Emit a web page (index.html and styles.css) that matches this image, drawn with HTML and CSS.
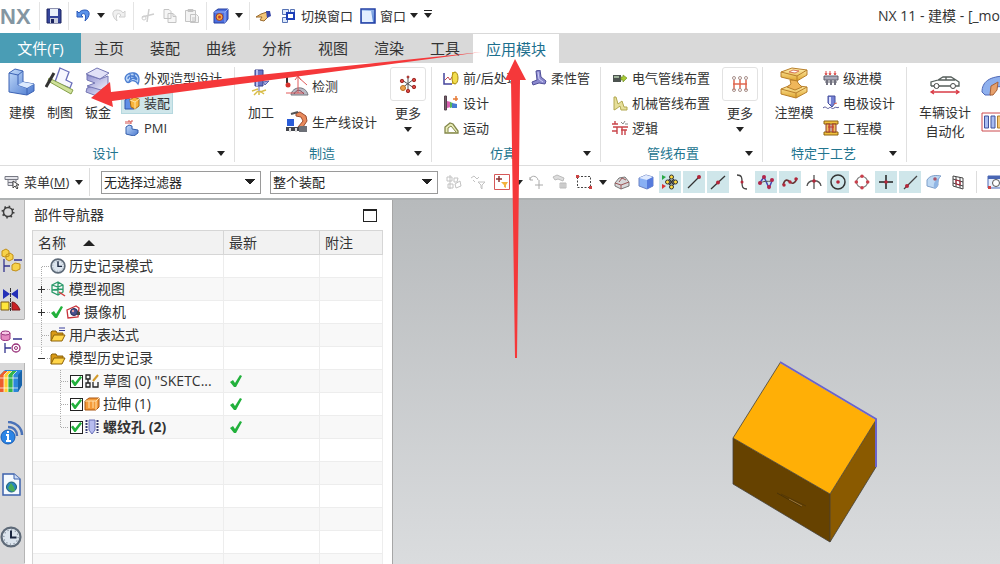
FILE: index.html
```html
<!DOCTYPE html>
<html lang="zh-CN">
<head>
<meta charset="utf-8">
<title>NX 11 - 建模</title>
<link rel="stylesheet" href="styles.css">
</head>
<body>
<svg class="defs" aria-hidden="true">
  <defs>
    <linearGradient id="blue" x1="0" y1="0" x2="1" y2="1"><stop offset="0" stop-color="#c3dcfa"/><stop offset="1" stop-color="#4a78cf"/></linearGradient>
    <linearGradient id="lilac" x1="0" y1="0" x2="1" y2="1"><stop offset="0" stop-color="#8f90d0"/><stop offset="1" stop-color="#f1f1fc"/></linearGradient>
    <linearGradient id="gold" x1="0" y1="0" x2="0" y2="1"><stop offset="0" stop-color="#fff0b0"/><stop offset="1" stop-color="#e0a52c"/></linearGradient>
    <symbol id="tick" viewBox="0 0 14 14"><path d="M1 8l3-2 2 3 5-8 2 1-6 11H5z" fill="#22b13c"/></symbol>
    <symbol id="folder" viewBox="0 0 16 16"><path d="M1 14V5l1-1h4l1 2h6v3" fill="#d99a16" stroke="#8d6208"/><path d="M1 14l3-6h11l-3 6z" fill="#ffd54a" stroke="#8d6208"/></symbol>
    <symbol id="dial" viewBox="0 0 20 20"><circle cx="10" cy="10" r="8.6" fill="#dce5ee" stroke="#5e6a78" stroke-width="2"/><circle cx="10" cy="10" r="6.5" fill="none" stroke="#7c8795" stroke-dasharray="1 2.4"/><path d="M10 4v6.500h5" fill="none" stroke="#1b2740" stroke-width="1.800"/></symbol>
  </defs>
</svg>

<div class="app">
  <header class="titlebar">
    <svg class="logo" width="34" height="20" role="img" aria-label="NX"><text x="0" y="18">NX</text></svg>
    <div class="quick">
      <button class="tool" aria-label="保存"><svg width="16" height="16"><path d="M1 1h13l1 1v13H1z" fill="#35459b" stroke="#1c2560"/><path d="M4 1h8v7H4z" fill="#eaf0fa"/><path d="M4 10h8v5H4z" fill="#c9cede"/><path d="M5 11h3v4H5z" fill="#1c2560"/></svg></button>
    </div>
    <div class="quick">
      <button class="tool" aria-label="撤消"><svg width="16" height="16"><path d="M2 3v6h6L6 7c3-3 6-1 4 6 5-4 6-11 0-11-3 0-5 1-6 3z" fill="#5b93ea" stroke="#2a58b8"/></svg></button>
      <button class="drop" aria-label="撤消列表"><i class="caret"></i></button>
      <button class="tool" aria-label="重做"><svg width="16" height="16"><path d="M14 3v6H8l2-2C7 4 4 6 6 13 1 9 0 2 6 2c3 0 5 1 6 3z" fill="#f0f0f0" stroke="#cfcfcf"/></svg></button>
    </div>
    <div class="quick">
      <button class="tool" aria-label="剪切"><svg width="16" height="16"><path d="M9 1L7 14M2 9l12-3" stroke="#cfcfcf" stroke-width="1.500" fill="none"/><circle cx="4" cy="10" r="2" fill="none" stroke="#cfcfcf"/></svg></button>
      <button class="tool" aria-label="复制"><svg width="16" height="16" fill="#f6f6f6" stroke="#c4c4c4"><path d="M2 1.500h5l2 2v7H2zM6 5.500h5l3 3v6H6zM11 5.500v3h3"/></svg></button>
      <button class="tool" aria-label="粘贴"><svg width="16" height="16" fill="#f3f3f3" stroke="#c4c4c4"><path d="M1.500 2.500h10v11h-10zM4 1.500h5v2H4zM6.500 6.500h6l2 2v6h-8zM8 10h4M8 12h4"/></svg></button>
    </div>
    <div class="quick">
      <button class="tool" aria-label="显示"><svg width="16" height="16"><path d="M1 4l4-3h10v10l-3 4H1z" fill="#4b6fe0" stroke="#273f9e"/><path d="M1 4h11v11M12 4l3-3" fill="none" stroke="#9cb2f5"/><circle cx="6.500" cy="9" r="3.500" fill="#f4ad42" stroke="#a33b2c"/><circle cx="6.500" cy="9" r="1.500" fill="#c93d2d"/></svg></button>
      <button class="drop" aria-label="显示列表"><i class="caret"></i></button>
    </div>
    <div class="quick">
      <button class="tool" aria-label="触控"><svg width="18" height="14"><path d="M1 8l5-3 6-2 2 4-5 5-4-1 2-3z" fill="#f3c678" stroke="#9a6a2d"/><path d="M11 2h4l1 5-4 2z" fill="#3847a8"/></svg></button>
      <button class="tool wide sw"><svg width="16" height="16" fill="#dce8fb" stroke="#5673b5"><path d="M1.500 1.500h6v5h-6zM9.500 1.500h4v3h-4zM1.500 9.500h5v5h-5z"/><path d="M6 5h7v6H6z" stroke-width="2" stroke="#1c3fb8" fill="#fff"/></svg><span>切换窗口</span></button>
      <button class="tool wide win"><svg width="16" height="16"><path d="M1 1h14v14H1z" fill="url(#blue)" stroke="#2340a5" stroke-width="1.500"/><path d="M2 3h9l2 11H2z" fill="#e3efff"/></svg><span>窗口</span><i class="caret"></i></button>
      <button class="drop last" aria-label="工具条选项"><i class="caret barred"></i></button>
    </div>
    <h1 class="doc">NX 11 - 建模 - [_mo</h1>
  </header>

  <nav class="tabs">
    <button class="file">文件(F)</button>
    <button>主页</button><button>装配</button><button>曲线</button><button>分析</button><button>视图</button><button>渲染</button><button>工具</button>
    <button class="on">应用模块</button>
  </nav>

  <div class="ribbon">
    <section class="group g-design">
      <div class="items">
        <button class="big"><svg width="30" height="30"><path d="M2 6l6-4 8 2v11l11 2v7l-7 4-18-3z" fill="url(#blue)" stroke="#3c63b4"/><path d="M2 6l9 2v10l9 3v7M11 8l5-4M20 21l7-4" fill="none" stroke="#3c63b4"/><path d="M11 18l5-3 11 2-7 4z" fill="#dcebff"/></svg><span>建模</span></button>
        <button class="big"><svg width="30" height="30"><path d="M15 1l9 4-3 8 6 3-2 5-15-6z" fill="#f7f7ff" stroke="#6a6fbb" stroke-width="1.300"/><path d="M4 11l24 12-2 4L3 14z" fill="#cfe19a" stroke="#86a049"/><path d="M9 6L1 20" stroke="#333" stroke-width="3"/></svg><span>制图</span></button>
        <button class="big"><svg width="30" height="30" stroke="#7476b4"><path d="M4 21l14-4 8 4-12 8-11-4z" fill="url(#lilac)"/><path d="M4 8l13 4 8-3v9l-7 5-14-4 8-3-8-3z" fill="url(#lilac)"/><path d="M3 7l11-6 12 5-9 6z" fill="#e1e1f7"/></svg><span>钣金</span></button>
        <div class="stack">
          <button class="small"><svg width="16" height="16" fill="none" stroke="#4b7dd0" stroke-width="1.300"><path d="M2 11C-1 6 5 2 10 3c5 1 6 6 4 11-2-3-4-4-7-3-2 2-4 2-5 0z" fill="#b9d5f8"/><path d="M4 9c0-4 7-4 9 0M6 4l1 6M10 3l1 6M5 12c1-4 5-5 8-2"/></svg><span>外观造型设计</span></button>
          <button class="small lit"><svg width="16" height="16"><path d="M1 5l3-2 3 2v4l3 1v4H1z" fill="#5f8ee6" stroke="#3154a8"/><path d="M6 5l4-3 5 2v7l-4 3-4-2z" fill="#f9b43a" stroke="#ad6c13"/><path d="M6 5l5 2v7M11 7l4-3" fill="none" stroke="#fde3a4"/></svg><span>装配</span></button>
          <button class="small"><svg width="16" height="16"><path d="M2 7l3-2 3 1v3l6 1v3l-4 3-8-2z" fill="url(#blue)" stroke="#355fab"/><path d="M2 1v3M4 4V1h2v3M9 1h-2v3" stroke="#d2524f" fill="none"/></svg><span>PMI</span></button>
        </div>
      </div>
      <footer><h2>设计</h2><button class="more" aria-label="设计选项"><i class="caret"></i></button></footer>
    </section>

    <section class="group g-make">
      <div class="items">
        <button class="big shift"><svg width="20" height="30"><path d="M4 3h8v16H4z" fill="#6875c6" stroke="#38408c"/><path d="M6 3v16" stroke="#b6bff0" stroke-width="2"/><path d="M8 19v6M12 15l6-1-4 4z" stroke="#5b64ad" fill="#aab0e6"/><path d="M1 24l6-2M15 23l-6 2M3 28l4-4M13 27l-4-3M8 24v4" stroke="#d8bd48" stroke-width="1.500"/></svg><span>加工</span></button>
        <div class="stack tall">
          <button class="small"><svg width="24" height="24"><path d="M2 2v7" stroke="#333" stroke-width="2"/><circle cx="3" cy="11" r="2.500" fill="#d8322c"/><path d="M6 21c1-9 15-10 17 0z" fill="#b9bac4" stroke="#74767f"/><path d="M13 19V3M10 6l3-4 3 4M13 3l9 8M1 19h18" stroke="#e25a5a" fill="none"/><path d="M9 20c3-5 6-5 10 0" fill="none" stroke="#8b4a5b"/></svg><span>检测</span></button>
          <button class="small"><svg width="24" height="24"><path d="M2 9h7v7H2z" fill="#2a5dd8"/><path d="M11 3l4-1 6 4 1 5-4 6h-5l5-6-2-4-5-1z" fill="#e98a5c" stroke="#9a4c2e"/><path d="M6 4l7-2" stroke="#555" stroke-width="2"/><path d="M1 17h21v4H1z" fill="#44464d"/><path d="M14 16h8v6h-8z" fill="#6d7077"/><path d="M4 18h2v4H4zM10 18h2v4h-2z" fill="#ddd"/></svg><span>生产线设计</span></button>
        </div>
        <button class="big gallery"><span class="frame"><svg width="18" height="20" stroke="#555"><path d="M9 3v13M3 6l12 8M15 5L3 14"/><g fill="#d8453f" stroke="#a12e2a"><circle cx="9" cy="3" r="1"/><circle cx="15" cy="6" r="1.700"/><circle cx="3" cy="7" r="1.700"/><circle cx="15" cy="13" r="1.700"/><circle cx="9" cy="17" r="1.700"/></g><circle cx="4" cy="14" r="2.500" fill="#eda04c" stroke="#b97324"/></svg></span><span>更多</span><i class="caret"></i></button>
      </div>
      <footer><h2>制造</h2><button class="more" aria-label="制造选项"><i class="caret"></i></button></footer>
    </section>

    <section class="group g-sim">
      <div class="items">
        <div class="stack">
          <button class="small"><svg width="16" height="16"><path d="M1 3v11h8" fill="none" stroke="#44449c" stroke-width="1.500"/><path d="M2 10l3-3 2 3 2-3" stroke="#c6474c" fill="none"/><path d="M9 2h3v12H9z" fill="#d9b824"/><ellipse cx="12" cy="8" rx="3" ry="6" fill="#f3de4e" stroke="#a78a14"/></svg><span>前/后处理</span></button>
          <button class="small"><svg width="16" height="16"><path d="M1.500 1h2v14h-2z" fill="#75616c" stroke="#54434d"/><path d="M4 6l4 1v5l-4 1z" fill="#d95fb0"/><path d="M7 7l3 1v4l-3 1z" fill="#56b85a"/><path d="M9 8l5 1v4l-5 0z" fill="#477ad2"/><path d="M13 1v5M10 4h5" stroke="#e67b36" stroke-width="1.500"/></svg><span>设计</span></button>
          <button class="small"><svg width="16" height="16"><path d="M2 13V7l5-4 3 1 5 7v2z" fill="#e9edb7" stroke="#82864b" stroke-width="1.300"/><path d="M5 12V8l3-2 5 6" fill="#fff" stroke="#82864b"/></svg><span>运动</span></button>
        </div>
        <div class="stack second">
          <button class="small"><svg width="16" height="16"><path d="M5 1l4-1 1 7 5 4-1 3-6-1-6 2-1-3 5-2z" fill="#8a88ce" stroke="#504f98"/><path d="M7 2l1 7 4 3" stroke="#cfcff6" fill="none"/></svg><span>柔性管</span></button>
        </div>
      </div>
      <footer><h2>仿真</h2><button class="more" aria-label="仿真选项"><i class="caret"></i></button></footer>
    </section>

    <section class="group g-pipe">
      <div class="items">
        <div class="stack">
          <button class="small"><svg width="16" height="16"><path d="M1 5h8v7H1z" fill="#4c5350"/><path d="M2 6h5v2H2z" fill="#9fb39a"/><path d="M9 7h2V5l4 3-4 4v-2H9z" fill="#a8cb34" stroke="#74922a" stroke-width=".7"/></svg><span>电气管线布置</span></button>
          <button class="small"><svg width="16" height="16"><path d="M2 2h2l2 7 4-3 2 6h3v3H9l-1-4-4 3-2 1z" fill="#e6df9a" stroke="#b2a850"/></svg><span>机械管线布置</span></button>
          <button class="small"><svg width="16" height="16" fill="none" stroke="#c9444a" stroke-width="1.400"><path d="M0 4h6M3 1v3M1 7h15M5 7v7M0 11h5M10 7v8M13 10v5M9 10h6"/><path d="M9 2l2 2 2-3M13 4h3" stroke="#888" stroke-width="1"/></svg><span>逻辑</span></button>
        </div>
        <button class="big gallery"><span class="frame"><svg width="18" height="20" fill="none" stroke="#e0674f" stroke-width="1.500"><path d="M2 10h14M3 6v10M9 5v10M15 6v10"/><g stroke="#a9918c" stroke-width="1"><circle cx="3" cy="4" r="1.500"/><circle cx="9" cy="4" r="1.500"/><circle cx="15" cy="4" r="1.500"/><circle cx="3" cy="16" r="1.500"/><circle cx="9" cy="16" r="1.500"/><circle cx="15" cy="16" r="1.500"/></g></svg></span><span>更多</span><i class="caret"></i></button>
      </div>
      <footer><h2>管线布置</h2><button class="more" aria-label="管线布置选项"><i class="caret"></i></button></footer>
    </section>

    <section class="group g-proc">
      <div class="items">
        <button class="big"><svg width="30" height="32" stroke="#b87f2b"><path d="M2 22l10-4 16 2v5l-11 6-15-4z" fill="url(#gold)"/><path d="M2 22l15 4 11-6M17 26v5" fill="none"/><path d="M11 13h7l1 3 4 4-7 3-8-3 4-3z" fill="#f0b65a"/><path d="M2 5l11-4 15 2v5l-10 6-16-4z" fill="url(#gold)"/><path d="M2 5l16 4 10-6M18 9v5" fill="none"/><path d="M10 5l4-2 6 1-4 2z" fill="#fff" stroke="#d9775a"/></svg><span>注塑模</span></button>
        <div class="stack">
          <button class="small"><svg width="16" height="16"><path d="M3 1v4M7 1v4M12 1v4M2 3l1 2 1-2M6 3l1 2 1-2M11 3l1 2 1-2" stroke="#db4846" fill="none"/><path d="M1 6h14v4H1zM2 12h12" fill="#a9a9b8" stroke="#5e5e6c"/><path d="M4 10v5M8 10v5M12 10v5" stroke="#72727f" stroke-width="2"/></svg><span>级进模</span></button>
          <button class="small"><svg width="16" height="16"><path d="M5 1h7v7l-3 4-4-4z" fill="#7581d3" stroke="#464f9a"/><path d="M7 2v7" stroke="#dde1ff" stroke-width="2"/><path d="M0 13c3-3 4 2 6 0s3 2 5 0 4 1 5-1" fill="none" stroke="#57579a"/><path d="M11 9l3-1" stroke="#df6a5a"/></svg><span>电极设计</span></button>
          <button class="small"><svg width="16" height="16"><path d="M1 1h14v3H1zM1 12h14v3H1z" fill="#f2c13d" stroke="#8b6312"/><path d="M3 4h4v8H3zM9 4h4v8H9z" fill="#f0c060" stroke="#8f3a2b"/><path d="M5 7h6M6 4v8M10 4v8" stroke="#c23a33"/></svg><span>工程模</span></button>
        </div>
      </div>
      <footer><h2>特定于工艺</h2><button class="more" aria-label="特定于工艺选项"><i class="caret"></i></button></footer>
    </section>

    <section class="group g-auto">
      <div class="items">
        <button class="big"><svg width="32" height="30" fill="none"><path d="M2 19v-4l7-2 5-3h8l5 3 3 2v4h-3M10 19h11M5 19H2M9 13h17M17 10v3" stroke="#555e5b" stroke-width="1.300"/><circle cx="7.500" cy="19" r="2.500" stroke="#444"/><circle cx="24" cy="19" r="2.500" stroke="#444"/><path d="M2 25h28M5 23l-3 2 3 2M27 23l3 2-3 2" stroke="#d93c47" stroke-width="1.300"/></svg><span>车辆设计<br>自动化</span></button>
        <div class="edge">
          <button aria-label="车身"><svg width="26" height="22"><path d="M1 17C1 7 8 1 26 1v14h-4c-2-5-6-4-9 0l-3 5H4z" fill="#8eb0ee" stroke="#5069b6"/><path d="M9 20l1-9 7-4-1 8-4 5z" fill="#e7a16c" stroke="#a86239"/></svg></button>
          <button aria-label="车窗"><svg width="26" height="22"><path d="M1 2h25v18H1z" fill="#fff" stroke="#cc4a4f"/><path d="M3.500 5h4v12h-4zM10 5h4v12h-4z" fill="#a9bdf0" stroke="#41539e"/><path d="M16.500 5h5v12h-5z" fill="#f4c473" stroke="#af7d2c"/></svg></button>
        </div>
      </div>
    </section>
  </div>

  <div class="selectbar">
    <button class="menu"><svg width="16" height="16" fill="#e4e4ea" stroke="#777983"><path d="M1 2.500h13v3H1zM4 5.500h8v3H4zM4 8.500h5v3H4z"/><path d="M9 7v7l2-2 2 3 1-1-2-3h3z" fill="#fff" stroke="#444"/></svg><span>菜单(<u>M</u>)</span><i class="caret"></i></button>
    <select class="pick" aria-label="类型过滤器"><option>无选择过滤器</option></select>
    <select class="pick scope" aria-label="选择范围"><option>整个装配</option></select>
    <div class="snaps">
      <button aria-label="过滤装配"><svg width="16" height="16" fill="none" stroke="#c2c2c2"><path d="M1 3h5v4H1zM2 10h5v4H2zM4 1v14M8 4h4l-1 4H8zM9 10l5-3 1 5-5 2z"/></svg></button>
      <button aria-label="重置过滤"><svg width="16" height="16" fill="none" stroke="#c2c2c2"><path d="M1 4l3-2 3 3 2-2M3 6l2 2M8 8h7l-3 3v4l-1-1v-3z"/></svg></button>
      <button class="boxed" aria-label="选择过滤"><svg width="16" height="16"><path d="M.5.5h15v15H.5z" fill="#fff" stroke="#d65858"/><path d="M5 2v6M2 5h6" stroke="#8d3434" stroke-width="1.500"/><path d="M7 8h7l-2 3v3l-2-1v-2z" fill="#f2b43e"/></svg></button>
      <button class="drop slim" aria-label="过滤列表"><i class="caret"></i></button>
      <button aria-label="返回"><svg width="16" height="16" fill="none" stroke="#aaa"><path d="M2 6c0-5 7-5 8 0M2 3v3h3M11 6v9M7 11h8"/></svg></button>
      <button aria-label="移除"><svg width="16" height="16" fill="#ddd" stroke="#bbb"><path d="M1 3l4-2 7 3-1 3-5-2-3 1zM8 9h6v5H8zM10 9v5M12 9v5"/></svg></button>
      <button aria-label="矩形选择"><svg width="16" height="16" fill="none"><path d="M1.500 2.500h13v11h-13z" stroke="#444" stroke-dasharray="2 1.500"/><path d="M0 1h3v3H0zM13 12h3v3h-3z" fill="#c44"/></svg></button>
      <button class="drop mid" aria-label="选择列表"><i class="caret"></i></button>
      <button aria-label="隐藏边"><svg width="16" height="16"><path d="M1 9l4-5 6-1 4 5v4l-8 3-6-3z" fill="#d8d8da" stroke="#777"/><path d="M1 9l6 2 8-3M7 11v4M5 8l3-4 4 2" stroke="#9c5454" fill="none"/></svg></button>
      <button aria-label="着色"><svg width="16" height="16"><path d="M1 4l7-3 7 2v9l-6 3-8-3z" fill="#89b0f4" stroke="#6c83c4"/><path d="M1 4l7-3 7 2-6 3z" fill="#dfeaff"/><path d="M9 6l6-3v9l-6 3z" fill="#567bdc"/></svg></button>
      <button class="lit" aria-label="启用捕捉点"><svg width="18" height="18"><path d="M1 2l4 2-4 3z" fill="#28a845"/><path d="M1 11l4 2-4 3z" fill="#d33"/><g fill="#ffdb3d" stroke="#333"><circle cx="10.500" cy="4" r="2"/><circle cx="6.500" cy="9" r="2"/><circle cx="14.500" cy="9" r="2"/><circle cx="10.500" cy="14" r="2"/></g><path d="M8 6l5 6M13 6l-5 6" stroke="#333" stroke-width="1.500"/></svg></button>
      <button class="lit" aria-label="端点"><svg width="16" height="16"><path d="M2 14L14 2" stroke="#333" stroke-width="1.300"/><circle cx="13" cy="3" r="2" fill="#b3263a"/></svg></button>
      <button class="lit" aria-label="中点"><svg width="16" height="16"><path d="M1 15L15 2" stroke="#333" stroke-width="1.300"/><circle cx="8" cy="8.500" r="2" fill="#b3263a"/></svg></button>
      <button aria-label="控制点"><svg width="16" height="16"><path d="M3 1c5 0 5 3 5 7s0 7 5 7" stroke="#444" stroke-width="1.300" fill="none"/><circle cx="8" cy="8" r="1.500" fill="#b3263a"/></svg></button>
      <button class="lit" aria-label="极点"><svg width="16" height="16"><path d="M1 10L6 3l5 11 3-7" stroke="#4444b0" fill="none" stroke-width="1.500"/><path d="M1 10c5-4 8-2 13-3" stroke="#555" fill="none"/><g fill="#b3264a"><circle cx="2" cy="9" r="2"/><circle cx="6" cy="3" r="2"/><circle cx="11" cy="13" r="2"/><circle cx="14" cy="6" r="2"/></g></svg></button>
      <button class="lit" aria-label="定义点"><svg width="16" height="16"><path d="M1 11c2-7 5-5 7-3s5 2 7-4" stroke="#633" fill="none" stroke-width="1.600"/><g fill="#b3263a"><circle cx="2" cy="11" r="1.700"/><circle cx="8" cy="8" r="1.700"/><circle cx="14" cy="5" r="1.700"/></g></svg></button>
      <button aria-label="交点"><svg width="16" height="16"><path d="M1 12C2 5 14 5 15 12M8 1v14" stroke="#555" fill="none" stroke-width="1.300"/><circle cx="8" cy="7" r="1.800" fill="#b3263a"/></svg></button>
      <button class="lit" aria-label="圆心"><svg width="16" height="16"><circle cx="8" cy="8" r="7" fill="none" stroke="#333" stroke-width="1.500"/><circle cx="8" cy="8" r="1.800" fill="#b3263a"/></svg></button>
      <button aria-label="象限点"><svg width="16" height="16"><circle cx="8" cy="8" r="5.500" fill="none" stroke="#777" stroke-width="1.200"/><g fill="#c9404c"><circle cx="8" cy="2.300" r="1.800"/><circle cx="8" cy="13.700" r="1.800"/><circle cx="2.300" cy="8" r="1.800"/><circle cx="13.700" cy="8" r="1.800"/></g></svg></button>
      <button class="lit" aria-label="现有点"><svg width="16" height="16"><path d="M8 1v14M1 8h14" stroke="#222" stroke-width="1.500"/><circle cx="8" cy="8" r="1.800" fill="#b3263a"/></svg></button>
      <button class="lit" aria-label="曲线上的点"><svg width="16" height="16"><path d="M2 15L15 2" stroke="#444" stroke-width="1.300"/><circle cx="5" cy="12" r="2" fill="#b3263a"/></svg></button>
      <button aria-label="面上的点"><svg width="16" height="16"><path d="M1 6c3-5 9-5 14-4-3 2-3 5-3 9-1 2-2 4-4 3l-7-2z" fill="#bdd8f3" stroke="#7f9fc9"/><path d="M8 14c-1-6 2-8 7-12-3 3-3 6-3 9-1 2-2 4-4 3z" fill="#8fb5e4"/><circle cx="9" cy="5" r="1.800" fill="#a8556a"/></svg></button>
      <button aria-label="栅格点"><svg width="16" height="16"><path d="M3 2l10 2v11L3 12zM3 5l10 3M3 9l10 3M6 3v10M10 3v11" fill="none" stroke="#444"/><path d="M6 6l4 1v4l-4-1z" stroke="#b3263a" fill="none"/></svg></button>
    </div>
    <button class="fit" aria-label="窗口缩放"><svg width="16" height="16"><path d="M1 2h14v12H1z" fill="#e8f0fd" stroke="#4966b4"/><path d="M1 2h14v3H1z" fill="#4966b4"/><circle cx="9" cy="9" r="3.500" fill="#fff" stroke="#555"/><path d="M1 12h3v3H1z" fill="#c44"/></svg></button>
  </div>

  <main class="work">
    <nav class="rail">
      <button class="gear" aria-label="设置"><svg width="16" height="16"><circle cx="8" cy="8" r="4.500" fill="none" stroke="#3f3f3f" stroke-width="1.500"/><circle cx="8" cy="8" r="5.500" fill="none" stroke="#3f3f3f" stroke-width="2" stroke-dasharray="1.500 2.820"/></svg></button>
      <button class="r1" aria-label="装配导航器"><svg width="22" height="26"><g fill="#f7d24a" stroke="#c28f16"><path d="M2 3l4-2 3 2v5L5 9 2 8zM6 7l4-2 3 2v4l-4 2-3-2zM12 17l3-2 5 1v5l-4 2-4-1z"/></g><path d="M4 11v13M4 18h6M14 12h8" stroke="#33338e" stroke-width="1.300"/></svg></button>
      <button class="r1" aria-label="约束导航器"><svg width="22" height="24"><path d="M3 1l7 5-7 5zM18 1l-7 5 7 5z" fill="#2430b8"/><path d="M10.500 0v23" stroke="#333" stroke-dasharray="4 1"/><path d="M1 14h8v8H1z" fill="#ffe63b" stroke="#7d5a14"/><path d="M12 14c3 0 6 3 8 8h-8z" fill="#c91f24" stroke="#7b1616"/></svg></button>
      <button class="r2 on" aria-label="部件导航器"><svg width="22" height="24"><path d="M1 3v6c1 2 8 2 9 0V3" fill="#e58bc2" stroke="#98307a"/><ellipse cx="5.500" cy="3" rx="4.500" ry="2" fill="#f7c9e6" stroke="#98307a"/><path d="M5 13v10M5 18h6M13 9h9" stroke="#33338e" stroke-width="1.300"/><circle cx="16" cy="18" r="4" fill="#fff" stroke="#98307a" stroke-width="1.300"/><circle cx="16" cy="18" r="1.500" fill="none" stroke="#98307a"/></svg></button>
      <button class="r3" aria-label="重用库"><svg width="22" height="26"><path d="M0 7l5-5h17v15l-4 7H0z" fill="#2c87d8"/><path d="M0 7h4v17H0zM0 7l4-4h4L4 7z" fill="#ed5d2d"/><path d="M4 7h4v17H4zM4 7l4-4h4L8 7z" fill="#ffd02f"/><path d="M8 7h5v17H8zM8 7l4-4h5l-4 4z" fill="#35b44c"/><path d="M18 7l4-5v15l-4 7z" fill="#1863aa"/><path d="M4 7v17M8 7v17M13 7v17M0 10h18M0 20h18M4 7l4-4M8 7l4-4M13 7l4-4" stroke="#fff" stroke-opacity=".7"/></svg></button>
      <button class="r4" aria-label="HD3D 工具"><svg width="24" height="24" fill="none"><circle cx="8" cy="16" r="7" fill="#2d86e6" stroke="#1a5cb2"/><path d="M8 10v2M6 14h2v5M6 20h5" stroke="#fff" stroke-width="2"/><path d="M8 6c6 0 9 4 9 9M8 1c8 0 14 6 14 13" stroke="#4a72b8" stroke-width="2.500"/></svg></button>
      <button class="r4" aria-label="网页浏览器"><svg width="22" height="24"><path d="M3 1h11l6 5v16H3z" fill="#f5faff" stroke="#3c62ad" stroke-width="1.500"/><path d="M14 1v5h6" fill="#cddcf5" stroke="#3c62ad"/><circle cx="11.500" cy="14" r="5" fill="#2a86c0" stroke="#1b5f6f"/><path d="M8 15l3-5 3 4 1 4c-3 1-5 0-7-3z" fill="#48ad57"/></svg></button>
      <button class="r4" aria-label="历史记录"><svg width="22" height="22"><use href="#dial"/></svg></button>
    </nav>

    <aside class="panel">
      <header><h2>部件导航器</h2><button class="dock" aria-label="停靠"></button></header>
      <table>
        <colgroup><col class="c-name"><col class="c-new"><col></colgroup>
        <thead><tr><th>名称<i class="sort"></i></th><th>最新</th><th>附注</th></tr></thead>
        <tbody>
          <tr><td><div class="node"><svg class="branch" width="17" height="23"><path d="M8.500 12v11M9 11.500h8"/></svg><svg width="16" height="16"><use href="#dial"/></svg><span>历史记录模式</span></div></td><td></td><td></td></tr>
          <tr><td><div class="node"><button class="twist" aria-label="展开模型视图"><svg class="branch" width="18" height="23"><path d="M8.500 0v7M8.500 17v6M14 11.500h3"/><path class="sign" d="M5 11.500h7M8.500 8v7"/></svg></button><svg width="16" height="16"><path d="M2 4l6-3 5 3v7l-5 3-6-3zM2 4l6 2 5-2M8 1v13M2 9l11-1" fill="none" stroke="#2a9a6a" stroke-width="1.300"/><path d="M9 11l6 4" stroke="#d23c3c" stroke-width="1.500"/></svg><span>模型视图</span></div></td><td></td><td></td></tr>
          <tr><td><div class="node"><button class="twist" aria-label="展开摄像机"><svg class="branch" width="18" height="23"><path d="M8.500 0v7M8.500 17v6M14 11.500h3"/><path class="sign" d="M5 11.500h7M8.500 8v7"/></svg></button><svg width="14" height="14"><use href="#tick"/></svg><svg width="16" height="16"><path d="M2 6l9-4 3 2-1 9-10 1z" fill="#fff" stroke="#c8323a" stroke-width="1.300"/><circle cx="9" cy="8" r="3.500" fill="#49508e" stroke="#272b57"/><path d="M12 7l3 1v3h-3z" fill="#444"/><circle cx="8" cy="7" r="1.200" fill="#e4a0a8"/></svg><span>摄像机</span></div></td><td></td><td></td></tr>
          <tr><td><div class="node"><svg class="branch" width="17" height="23"><path d="M8.500 0v23M9 11.500h8"/></svg><svg width="16" height="16"><use href="#folder"/><path d="M9 1h6M9 3.500h6" stroke="#3a3f9c"/></svg><span>用户表达式</span></div></td><td></td><td></td></tr>
          <tr><td><div class="node"><button class="twist" aria-label="折叠模型历史记录"><svg class="branch" width="18" height="23"><path d="M8.500 0v7M14 11.500h3"/><path class="sign" d="M5 11.500h7"/></svg></button><svg width="16" height="16"><use href="#folder"/></svg><span>模型历史记录</span></div></td><td></td><td></td></tr>
          <tr><td><label class="node"><svg class="branch" width="37" height="23"><path d="M27.500 0v23M28 11.500h8"/></svg><input type="checkbox" checked><svg width="16" height="16" fill="none" stroke="#222" stroke-width="1.300"><path d="M2 2h4v4H2zM2 10h4v4H2zM4 6v4M9 9v5h5V9"/><path d="M9 8l5-6" stroke="#d39a2a" stroke-width="2"/></svg><span>草图 (0) "SKETC...</span></label></td><td class="ok"><svg width="14" height="14" role="img" aria-label="最新"><use href="#tick"/></svg></td><td></td></tr>
          <tr><td><label class="node"><svg class="branch" width="37" height="23"><path d="M27.500 0v23M28 11.500h8"/></svg><input type="checkbox" checked><svg width="16" height="16"><path d="M1 5l4-3h10v9l-3 3H1z" fill="#f49a38" stroke="#a85511"/><path d="M5 5v7M9 5v7M12 5v9M1 5h11l3-3" stroke="#ffe0ab" fill="none"/></svg><span>拉伸 (1)</span></label></td><td class="ok"><svg width="14" height="14" role="img" aria-label="最新"><use href="#tick"/></svg></td><td></td></tr>
          <tr class="current"><td><label class="node"><svg class="branch" width="37" height="23"><path d="M27.500 0v11M28 11.500h8"/></svg><input type="checkbox" checked><svg width="16" height="16"><path d="M5 1h6v10l-3 4-3-4z" fill="#b7bcf0" stroke="#6a70b8"/><path d="M2.500 1v13M13.500 1v13" stroke="#34396f" stroke-width="2" stroke-dasharray="2 1"/></svg><span>螺纹孔 (2)</span></label></td><td class="ok"><svg width="14" height="14" role="img" aria-label="最新"><use href="#tick"/></svg></td><td></td></tr>
          <tr><td></td><td></td><td></td></tr>
          <tr><td></td><td></td><td></td></tr>
          <tr><td></td><td></td><td></td></tr>
          <tr><td></td><td></td><td></td></tr>
          <tr><td></td><td></td><td></td></tr>
          <tr><td></td><td></td><td></td></tr>
        </tbody>
      </table>
    </aside>

    <div class="canvas">
      <svg class="part" width="148" height="184" role="img" aria-label="长方体零件">
        <path d="M2 77l97 56v48L2 123z" fill="#664200"/>
        <path d="M99 133l46-74v47L99 181z" fill="#8a5a00"/>
        <path d="M49 2l96 57-46 74L2 77z" fill="#ffaf06"/>
        <path d="M49 2L2 77v46l97 58 46-75M2 77l97 56 46-74M99 133v48" fill="none" stroke="#44403a" stroke-width=".8"/>
        <path d="M49 1l96 57v48" fill="none" stroke="#6a64cc" stroke-width="2"/>
        <path d="M46 132l25 14" fill="none" stroke="#4b3307"/><path d="M58 138l13 7" stroke="#95733a"/><path d="M50 133l25 12" stroke="#543807"/>
      </svg>
    </div>
  </main>

  <svg class="callouts" width="1000" height="564" aria-hidden="true">
    <path d="M482 52L240 77 111 92 110 82 91 98l22 9-1-6 128-17z"/>
    <path d="M515 59l-10 21h6l4 278h2l3-278h6z"/>
  </svg>
</div>
</body>
</html>
```
FILE: styles.css
```css
* { box-sizing: border-box; }

body {
  margin: 0;
  font: 13px/18px "Open Sans", "Noto Sans CJK SC", sans-serif;
  color: #333;
  background: #fff;
}

button {
  padding: 0;
  border: 0;
  background: none;
  font: inherit;
  color: inherit;
  white-space: nowrap;
}

svg { display: block; flex: none; }
h1, h2 { margin: 0; font-size: 13px; font-weight: 400; }
.defs { position: absolute; width: 0; height: 0; }

.app {
  position: relative;
  display: flex;
  flex-direction: column;
  height: 100vh;
  overflow: hidden;
}

.caret {
  flex: none;
  display: block;
  border: 4px solid transparent;
  border-top: 5px solid #222;
  border-bottom: 0;
}
.caret.barred { position: relative; }
.caret.barred::before {
  content: "";
  position: absolute;
  left: -4px;
  top: -8px;
  width: 8px;
  height: 1px;
  background: #222;
}

/* Title bar */
.titlebar { display: flex; align-items: center; height: 33px; flex: none; padding-bottom: 2px; }
.logo { margin-right: 5px; }
.logo text { font: bold 22px "Liberation Sans", sans-serif; fill: #8496a2; }
.quick { display: flex; align-items: center; height: 28px; border-left: 1px solid #e4e4e4; padding: 0 3px; }
.tool { display: flex; align-items: center; justify-content: center; gap: 4px; width: 22px; height: 22px; }
.tool.wide { width: auto; }
.sw { margin-left: 6px; }
.win { margin-left: 7px; }
.drop { display: flex; justify-content: center; width: 14px; }
.last { margin-left: 3px; }
.titlebar .doc { flex: none; margin-left: auto; white-space: nowrap; font-size: 14px; }

/* Tabs */
.tabs { display: flex; flex: none; height: 30px; background: #d9d9d9; font-size: 15px; }
.tabs button { padding: 0 13px; }
.tabs .file { width: 81px; background: #4a9db5; color: #fff; text-align: center; }
.tabs .on { margin: 1px 0 0; background: #fff; color: #1c6f8e; }

/* Ribbon */
.ribbon { display: flex; flex: none; height: 103px; padding: 4px 0 3px; border-bottom: 1px solid #ddd; overflow: hidden; }
.group { display: flex; flex-direction: column; flex: none; border-right: 1px solid #e0e0e0; }
.items { display: flex; flex: 1; align-items: flex-start; }
.group footer { display: flex; align-items: center; height: 18px; }
.group h2 { flex: 1; text-align: center; color: #23758f; }
.more { width: 26px; display: flex; justify-content: center; }

.big { display: flex; flex-direction: column; align-items: center; width: 38px; gap: 6px; }
.big svg { min-height: 20px; }
.big span + .caret { margin-top: 2px; }
.frame { display: flex; align-items: center; justify-content: center; width: 36px; height: 34px; border: 1px solid #e2e2e2; border-radius: 3px; }
.gallery { gap: 3px; margin-left: auto; }

.stack { display: flex; flex-direction: column; align-items: flex-start; gap: 4px; }
.small { display: flex; align-items: center; gap: 4px; height: 21px; padding: 0 2px; text-align: left; }
.lit { background: #cfe6ea; }
.small.lit { outline: 1px solid #b5d8df; }
.tall { gap: 12px; padding-top: 7px; }
.tall .small { height: 24px; gap: 3px; }

.g-design { width: 235px; padding-left: 3px; }
.g-design .stack { margin-left: 5px; }
.g-make { width: 197px; padding-left: 4px; }
.g-make .shift { width: 44px; }
.g-make .gallery { margin-right: 4px; }
.g-sim { width: 169px; padding-left: 9px; }
.g-sim .second { margin-left: 2px; }
.g-sim .stack:first-child { width: 86px; }
.g-sim footer { margin-left: -9px; }
.g-pipe { width: 162px; padding-left: 9px; }
.g-pipe .gallery { margin-right: 3px; }
.g-proc { width: 144px; padding-left: 8px; }
.g-proc .big { width: 46px; gap: 4px; }
.g-proc .stack { margin-left: 4px; }
.g-proc footer { margin-left: -4px; }
.g-auto { flex: 1 0 94px; border: 0; padding-left: 10px; }
.g-auto .big { width: 56px; line-height: 19px; }
.edge { display: flex; flex-direction: column; gap: 14px; margin-left: 8px; padding-top: 8px; }

/* Selection bar */
.selectbar { display: flex; align-items: center; flex: none; height: 34px; border-bottom: 2px solid #aeb2b3; overflow: hidden; }
.menu { display: flex; align-items: center; gap: 4px; flex: none; width: 90px; height: 28px; padding-left: 4px; border-right: 1px solid #ddd; }
.menu .caret { margin-left: 2px; }
.pick {
  appearance: none;
  flex: none;
  width: 160px;
  height: 23px;
  margin-left: 11px;
  padding: 0 2px;
  border: 1px solid #9a9a9a;
  border-radius: 0;
  font: inherit;
  color: #222;
  background: conic-gradient(from -40deg at 50% 100%, #222 80deg, transparent 0) right 5px center / 10px 6px no-repeat, #fff;
}
.scope { width: 168px; margin-left: 9px; }
.snaps { display: flex; align-items: center; flex: none; margin-left: 4px; padding-right: 6px; border-right: 1px solid #ddd; }
.snaps button { display: flex; align-items: center; justify-content: center; width: 22px; height: 22px; margin: 0 1px; }
.snaps .slim { width: 8px; }
.snaps .mid { width: 12px; }
.fit { margin-left: 10px; }

/* Work area */
.work { display: flex; flex: 1; min-height: 0; }
.rail { display: flex; flex-direction: column; flex: none; width: 25px; background: #d9d9da; }
.rail button { display: flex; align-items: center; flex: none; border-right: 1px solid #b5b5b5; }
.rail .gear { height: 41px; padding-bottom: 17px; }
.rail .r1 { height: 39px; }
.rail .r2 { height: 44px; }
.rail .r3 { height: 44px; padding-bottom: 8px; }
.rail .r4 { height: 52px; }
.rail .on { background: #fff; border-right-color: #fff; border-top: 1px solid #b5b5b5; }

.panel { flex: none; width: 368px; padding: 0 9px 0 7px; border-right: 1px solid #a6a6a6; overflow: hidden; }
.panel header { display: flex; align-items: center; justify-content: space-between; height: 30px; padding: 0 6px 0 2px; }
.panel h2 { font-size: 14px; }
.dock { width: 14px; height: 13px; border: 1px solid #222; border-top-width: 2px; }
table { width: 100%; table-layout: fixed; border-collapse: separate; border-spacing: 0; border-left: 1px solid #d4d4d4; font-size: 14px; }
.c-name { width: 191px; }
.c-new { width: 96px; }
th, td { height: 23px; padding: 0; border-right: 1px solid #ededed; border-bottom: 1px solid #ededed; overflow: hidden; white-space: nowrap; line-height: 22px; }
th { height: 25px; padding: 0 5px; text-align: left; font-weight: 400; background: #f2f2f2; border-top: 1px solid #ddd; border-color: #d6d6d6; }
tbody tr:nth-child(even) { background: #f8f8f8; }
.sort { display: inline-block; margin-left: 17px; border: 6px solid transparent; border-bottom: 6px solid #222; border-top: 0; vertical-align: 2px; }
.node { display: flex; align-items: center; gap: 1px; height: 22px; }
.node span { margin-left: 2px; }
.branch { fill: none; stroke: #aaa; stroke-dasharray: 1 1; margin-right: -1px; }
.twist { margin-right: -1px; }
.branch .sign { stroke: #333; stroke-dasharray: none; }
.node input {
  appearance: none;
  flex: none;
  width: 13px;
  height: 13px;
  margin: 0;
  border: 1px solid #222;
  background: #fff;
  display: grid;
  place-items: center;
}
.node input:checked::before {
  content: "";
  width: 11px;
  height: 10px;
  background: #22b13c;
  clip-path: polygon(0 50%, 18% 36%, 38% 62%, 84% 0, 100% 14%, 42% 100%, 30% 100%);
}
.ok { padding-left: 5px; }
.current { font-weight: 700; }

.canvas { position: relative; flex: 1; overflow: hidden; background: linear-gradient(#b7babc, #dadcde); }
.part { position: absolute; left: 338px; top: 161px; }

.callouts { position: absolute; left: 0; top: 0; pointer-events: none; fill: #f5383a; }
```
